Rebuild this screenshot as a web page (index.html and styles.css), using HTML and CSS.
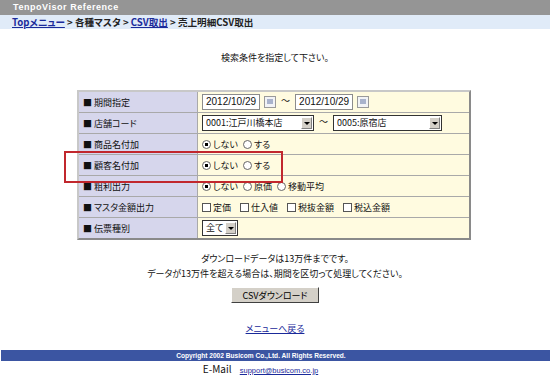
FILE: index.html
```html
<!DOCTYPE html>
<html lang="ja">
<head>
    <meta charset="UTF-8">
    <title>TenpoVisor Reference</title>
    <link rel="stylesheet" href="styles.css">
</head>
<body>

<div class="topbar">TenpoVisor Reference</div>
<div class="crumbs">
    <a href="#">Topメニュー</a> &gt; 各種マスタ &gt; <a href="#">CSV取出</a> &gt; 売上明細CSV取出
</div>

<div class="content">
    <p class="lead">検索条件を指定して下さい。</p>

    <div class="form-wrap">
        <table class="cond">
            <tr>
                <th>■ 期間指定</th>
                <td>
                    <span class="date">2012/10/29</span><span class="cal"></span>
                    <span class="tilde">～</span>
                    <span class="date">2012/10/29</span><span class="cal"></span>
                </td>
            </tr>
            <tr>
                <th>■ 店舗コード</th>
                <td>
                    <span class="sel shop1">0001:江戸川橋本店<i class="arrow"></i></span>
                    <span class="tilde">～</span>
                    <span class="sel shop2">0005:原宿店<i class="arrow"></i></span>
                </td>
            </tr>
            <tr>
                <th>■ 商品名付加</th>
                <td><span class="radio on"></span>しない<span class="radio"></span>する</td>
            </tr>
            <tr>
                <th>■ 顧客名付加</th>
                <td><span class="radio on"></span>しない<span class="radio"></span>する</td>
            </tr>
            <tr>
                <th>■ 粗利出力</th>
                <td><span class="radio on"></span>しない<span class="radio"></span>原価<span class="radio"></span>移動平均</td>
            </tr>
            <tr>
                <th>■ マスタ金額出力</th>
                <td>
                    <span class="check"></span>定価
                    <span class="check"></span>仕入値
                    <span class="check"></span>税抜金額
                    <span class="check"></span>税込金額
                </td>
            </tr>
            <tr>
                <th>■ 伝票種別</th>
                <td><span class="sel kind">全て<i class="arrow"></i></span></td>
            </tr>
        </table>
        <div class="mark"></div>
    </div>

    <p class="note">ダウンロードデータは13万件までです。<br>データが13万件を超える場合は、期間を区切って処理してください。</p>

    <button class="dl">CSVダウンロード</button>

    <p class="back"><a href="#">メニューへ戻る</a></p>
</div>

<footer>
    <div class="copy">Copyright 2002 Busicom Co.,Ltd. All Rights Reserved.</div>
    <p class="mail">E-Mail <a href="#">support@busicom.co.jp</a></p>
</footer>

</body>
</html>
```

FILE: styles.css
```css
body {
    margin: 0;
    background: #fff;
    color: #111;
    font-family: "Noto Sans CJK JP", "Liberation Sans", sans-serif;
    font-size: 9px;
    font-feature-settings: "palt";
}
a {
    color: #1a2a9a;
}
.topbar {
    height: 15px;
    line-height: 15px;
    padding-left: 13px;
    background: #959595;
    color: #fff;
    font-family: "Liberation Sans", sans-serif;
    font-weight: bold;
    font-size: 9px;
    letter-spacing: 0.55px;
}
.crumbs {
    height: 14px;
    line-height: 14px;
    padding-left: 12px;
    background: #e0ebf8;
    font-weight: bold;
    font-size: 9.6px;
    color: #222;
}
.crumbs a {
    color: #1a2a9a;
}
.content {
    text-align: center;
}
.lead {
    margin: 0;
    padding-top: 22px;
    line-height: 14px;
}
.form-wrap {
    position: relative;
    width: 394px;
    margin: 25px auto 0 77px;
}
.cond {
    width: 394px;
    border-collapse: separate;
    border-spacing: 0;
    border: 2px solid;
    border-color: #c8c8c8 #8a8a8a #8a8a8a #c8c8c8;
    text-align: left;
}
.cond th,
.cond td {
    height: 20px;
    padding: 0 0 0 4px;
    border-bottom: 1px solid #a9a9a9;
    font-weight: normal;
    white-space: nowrap;
}
.cond tr:last-child th,
.cond tr:last-child td {
    border-bottom: none;
}
.cond th {
    width: 114px;
    background: #d6d6ec;
    border-right: 1px solid #a9a9a9;
}
.cond td {
    background: #fffbe0;
}
.date {
    display: inline-block;
    width: 53px;
    height: 14px;
    line-height: 14px;
    padding-left: 3px;
    background: #fff;
    border: 1px solid #8c8c8c;
    font-family: "Liberation Sans", sans-serif;
    font-size: 10px;
    vertical-align: middle;
}
.cal {
    display: inline-block;
    width: 10px;
    height: 10px;
    margin-left: 4px;
    border: 1px solid #9a9a9a;
    background: linear-gradient(#a9b3cc, #a9b3cc) 2px 2px / 6px 5px no-repeat, #f2f3f6;
    vertical-align: middle;
}
.tilde {
    margin: 0 3px;
}
.sel {
    position: relative;
    display: inline-block;
    height: 14px;
    line-height: 14px;
    padding-left: 3px;
    background: #fff;
    border: 1px solid #333;
    font-size: 9px;
    vertical-align: middle;
}
.shop1 {
    width: 107px;
}
.shop2 {
    width: 104px;
}
.kind {
    width: 31px;
}
.arrow {
    position: absolute;
    right: 1px;
    top: 1px;
    width: 11px;
    height: 12px;
    background: #d4d0c8;
    border: 1px solid;
    border-color: #fff #808080 #808080 #fff;
    box-sizing: border-box;
}
.arrow::after {
    content: "";
    position: absolute;
    left: 2px;
    top: 4px;
    border: 3px solid transparent;
    border-top: 3px solid #000;
}
.radio {
    display: inline-block;
    width: 7px;
    height: 7px;
    border: 1px solid #666;
    border-radius: 50%;
    background: #fff;
    margin-right: 2px;
    vertical-align: -1px;
}
.radio ~ .radio {
    margin-left: 5px;
}
.radio.on {
    background: radial-gradient(circle, #000 0 1.6px, #fff 2px);
}
.check {
    display: inline-block;
    width: 7px;
    height: 7px;
    border: 1px solid #555;
    background: #fff;
    margin: 0 2px 0 0;
    vertical-align: -1px;
}
.check ~ .check {
    margin-left: 7px;
}
.mark {
    position: absolute;
    left: -13px;
    top: 61px;
    width: 215px;
    height: 28px;
    border: 2px solid #c1272d;
}
.note {
    margin: 11px 0 0;
    line-height: 15px;
}
.dl {
    margin-top: 6px;
    width: 88px;
    height: 16px;
    padding: 0;
    font-family: "Noto Sans CJK JP", sans-serif;
    font-size: 9px;
    font-feature-settings: "palt";
    background: #d4d0c8;
    border: 1px solid;
    border-color: #fff #404040 #404040 #fff;
}
.back {
    margin: 19px 0 0;
    line-height: 14px;
}
footer {
    margin-top: 14px;
    text-align: center;
}
.copy {
    height: 11px;
    line-height: 11px;
    margin-left: 1px;
    padding-right: 29px;
    background: #3b55a2;
    color: #fff;
    font-family: "Liberation Sans", sans-serif;
    font-weight: bold;
    font-size: 6.6px;
}
.mail {
    margin: 1px 0 0;
    padding-right: 29px;
    line-height: 14px;
    font-size: 10px;
}
.mail a {
    margin-left: 6px;
    font-family: "Liberation Sans", sans-serif;
    font-size: 7.5px;
}
```
